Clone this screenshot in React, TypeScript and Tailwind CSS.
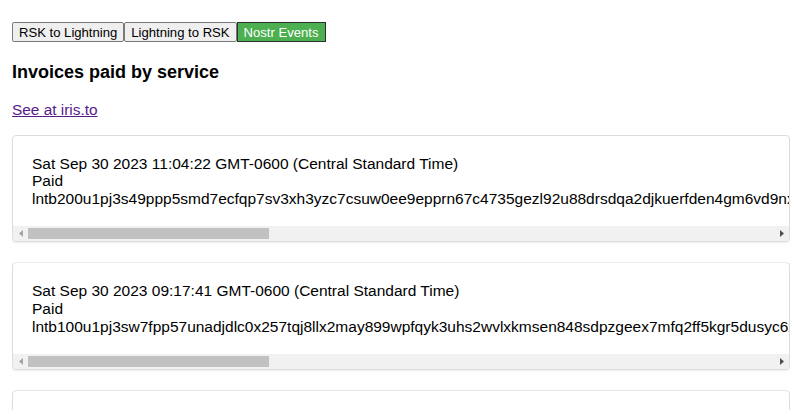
import { FC } from 'react';

interface Invoice {
  id: number;
  date: string;
  status: string;
  bolt11: string;
}

const invoices: Invoice[] = [
  {
    id: 1,
    date: 'Sat Sep 30 2023 11:04:22 GMT-0600 (Central Standard Time)',
    status: 'Paid',
    bolt11:
      'lntb200u1pj3s49ppp5smd7ecfqp7sv3xh3yzc7csuw0ee9epprn67c4735gezl92u88drsdqa2djkuerfden4gm6vd9nxq9p5hsqrzjqwfn3p9278ttzzpe0e00uhyxhned3j5d9acqak5emwfpflp8z2cnfls8wd5yq9hqqqyqqqqlgqqqqqeqqjqsp5n7s3gkr2mzz4ytxwnq6lukexhv2h9a0uwq7vlsk38ncxxchgjdvs9qyyssqhz5sgzy3ux4e3v0ex9rkzdh2w78kj8wlq3ctfmr3v8a6acjqzv4jyv5c2r9vnfdsh3ytr8e7j0e5q6ztmmjj7pwhf5ggl7zscusqq4l3n0a',
  },
  {
    id: 2,
    date: 'Sat Sep 30 2023 09:17:41 GMT-0600 (Central Standard Time)',
    status: 'Paid',
    bolt11:
      'lntb100u1pj3sw7fpp57unadjdlc0x257tqj8llx2may899wpfqyk3uhs2wvlxkmsen848sdpzgeex7mfq2ff5kgr5dusyc6xq9p5hsqrzjqwfn3p9278ttzzpe0e00uhyxhned3j5d9acqak5emwfpflp8z2cnfls8wd5yq9hqqqyqqqqlgqqqqqeqqjqsp5q4f6ydj0d3ktq4xcz8wgmvmnr3m2fxz5t7e4xa9l0s2y8ru3f9qs9qyyssqx7m0x2t4gl5kf8a7j3n0dxv6m4wz9qg5hnzj0yc3ekfta7lr2ecs0t4kqzh6ya3w5xg9t6lzy9p8hm3ne4xj2tdd5cpj2r6qf',
  },
  {
    id: 3,
    date: 'Sat Sep 30 2023 08:52:10 GMT-0600 (Central Standard Time)',
    status: 'Paid',
    bolt11:
      'lntb50u1pj3sqy8pp5f7k3n2w0qz4xj6dlu8ts9c5y2ap6vmrghe0q3lk7n4w8xz2c9rsdqa2djkuerfden4gm6vd9nxq9p5hsqrzjqwfn3p9278ttzzpe0e00uhyxhned3j5d9acqak5emwfpflp8z2cnfls8wd5yq9hqqqyqqqqlgqqqqqeqqjqsp5a8j2xkpz7v',
  },
];

const tabs = ['RSK to Lightning', 'Lightning to RSK', 'Nostr Events'];

// classic scrollbar strip, scrolled to the start
const ScrollStrip: FC = () => (
  <div className="flex h-[15px] items-center bg-[#f1f1f1]">
    <div className="flex h-[15px] w-[15px] items-center justify-center">
      <svg width="4" height="7" viewBox="0 0 4 7">
        <path d="M4 0 L0 3.5 L4 7 Z" fill="#a3a3a3" />
      </svg>
    </div>
    <div className="flex flex-1 items-center">
      <div className="h-[11px] w-[241px] bg-[#c1c1c1]" />
    </div>
    <div className="flex h-[15px] w-[15px] items-center justify-center">
      <svg width="4" height="7" viewBox="0 0 4 7">
        <path d="M0 0 L4 3.5 L0 7 Z" fill="#505050" />
      </svg>
    </div>
  </div>
);

const InvoiceCard: FC<{ invoice: Invoice }> = ({ invoice }) => (
  <div className="w-[778px] shrink-0 overflow-hidden rounded-[4px] border border-[#dcdcdc] bg-white shadow-[0_1px_2px_rgba(0,0,0,0.08)] [clip-path:inset(0_0_-3px_0)]">
    <div className="w-[776px] overflow-hidden px-[19px] pt-[19px] pb-[19px] text-[15.5px] leading-[17.6px] text-black">
      <div className="overflow-hidden whitespace-nowrap">{invoice.date}</div>
      <div>{invoice.status}</div>
      <div className="w-[757px] overflow-hidden whitespace-nowrap">{invoice.bolt11}</div>
    </div>
    <ScrollStrip />
  </div>
);

const App: FC = () => {
  const active = 'Nostr Events';

  return (
    <div className="h-[410px] overflow-hidden bg-white pl-[12px] pt-[22px] font-['Liberation_Sans',Arial,sans-serif] text-black">
      <div className="flex">
        {tabs.map(tab => (
          <button
            key={tab}
            className={
              tab === active
                ? 'h-[20px] border border-[#2f2f2f] bg-[#4caf50] px-[6px] text-[13.1px] leading-[15px] text-white'
                : 'h-[20px] rounded-[2px] border border-[#7a7a7a] bg-[#efefef] px-[6px] text-[13.1px] leading-[15px] text-black'
            }
          >
            {tab}
          </button>
        ))}
      </div>

      <h3 className="mt-[20px] text-[18px] font-bold leading-[21px]">Invoices paid by service</h3>

      <a href="#" className="mt-[18px] block w-fit text-[15.4px] leading-[17.6px] text-[#551a8b] underline">
        See at iris.to
      </a>

      <div className="mt-[16px] flex flex-col gap-[20px]">
        {invoices.map(invoice => (
          <InvoiceCard key={invoice.id} invoice={invoice} />
        ))}
      </div>
    </div>
  );
};

export default App;
